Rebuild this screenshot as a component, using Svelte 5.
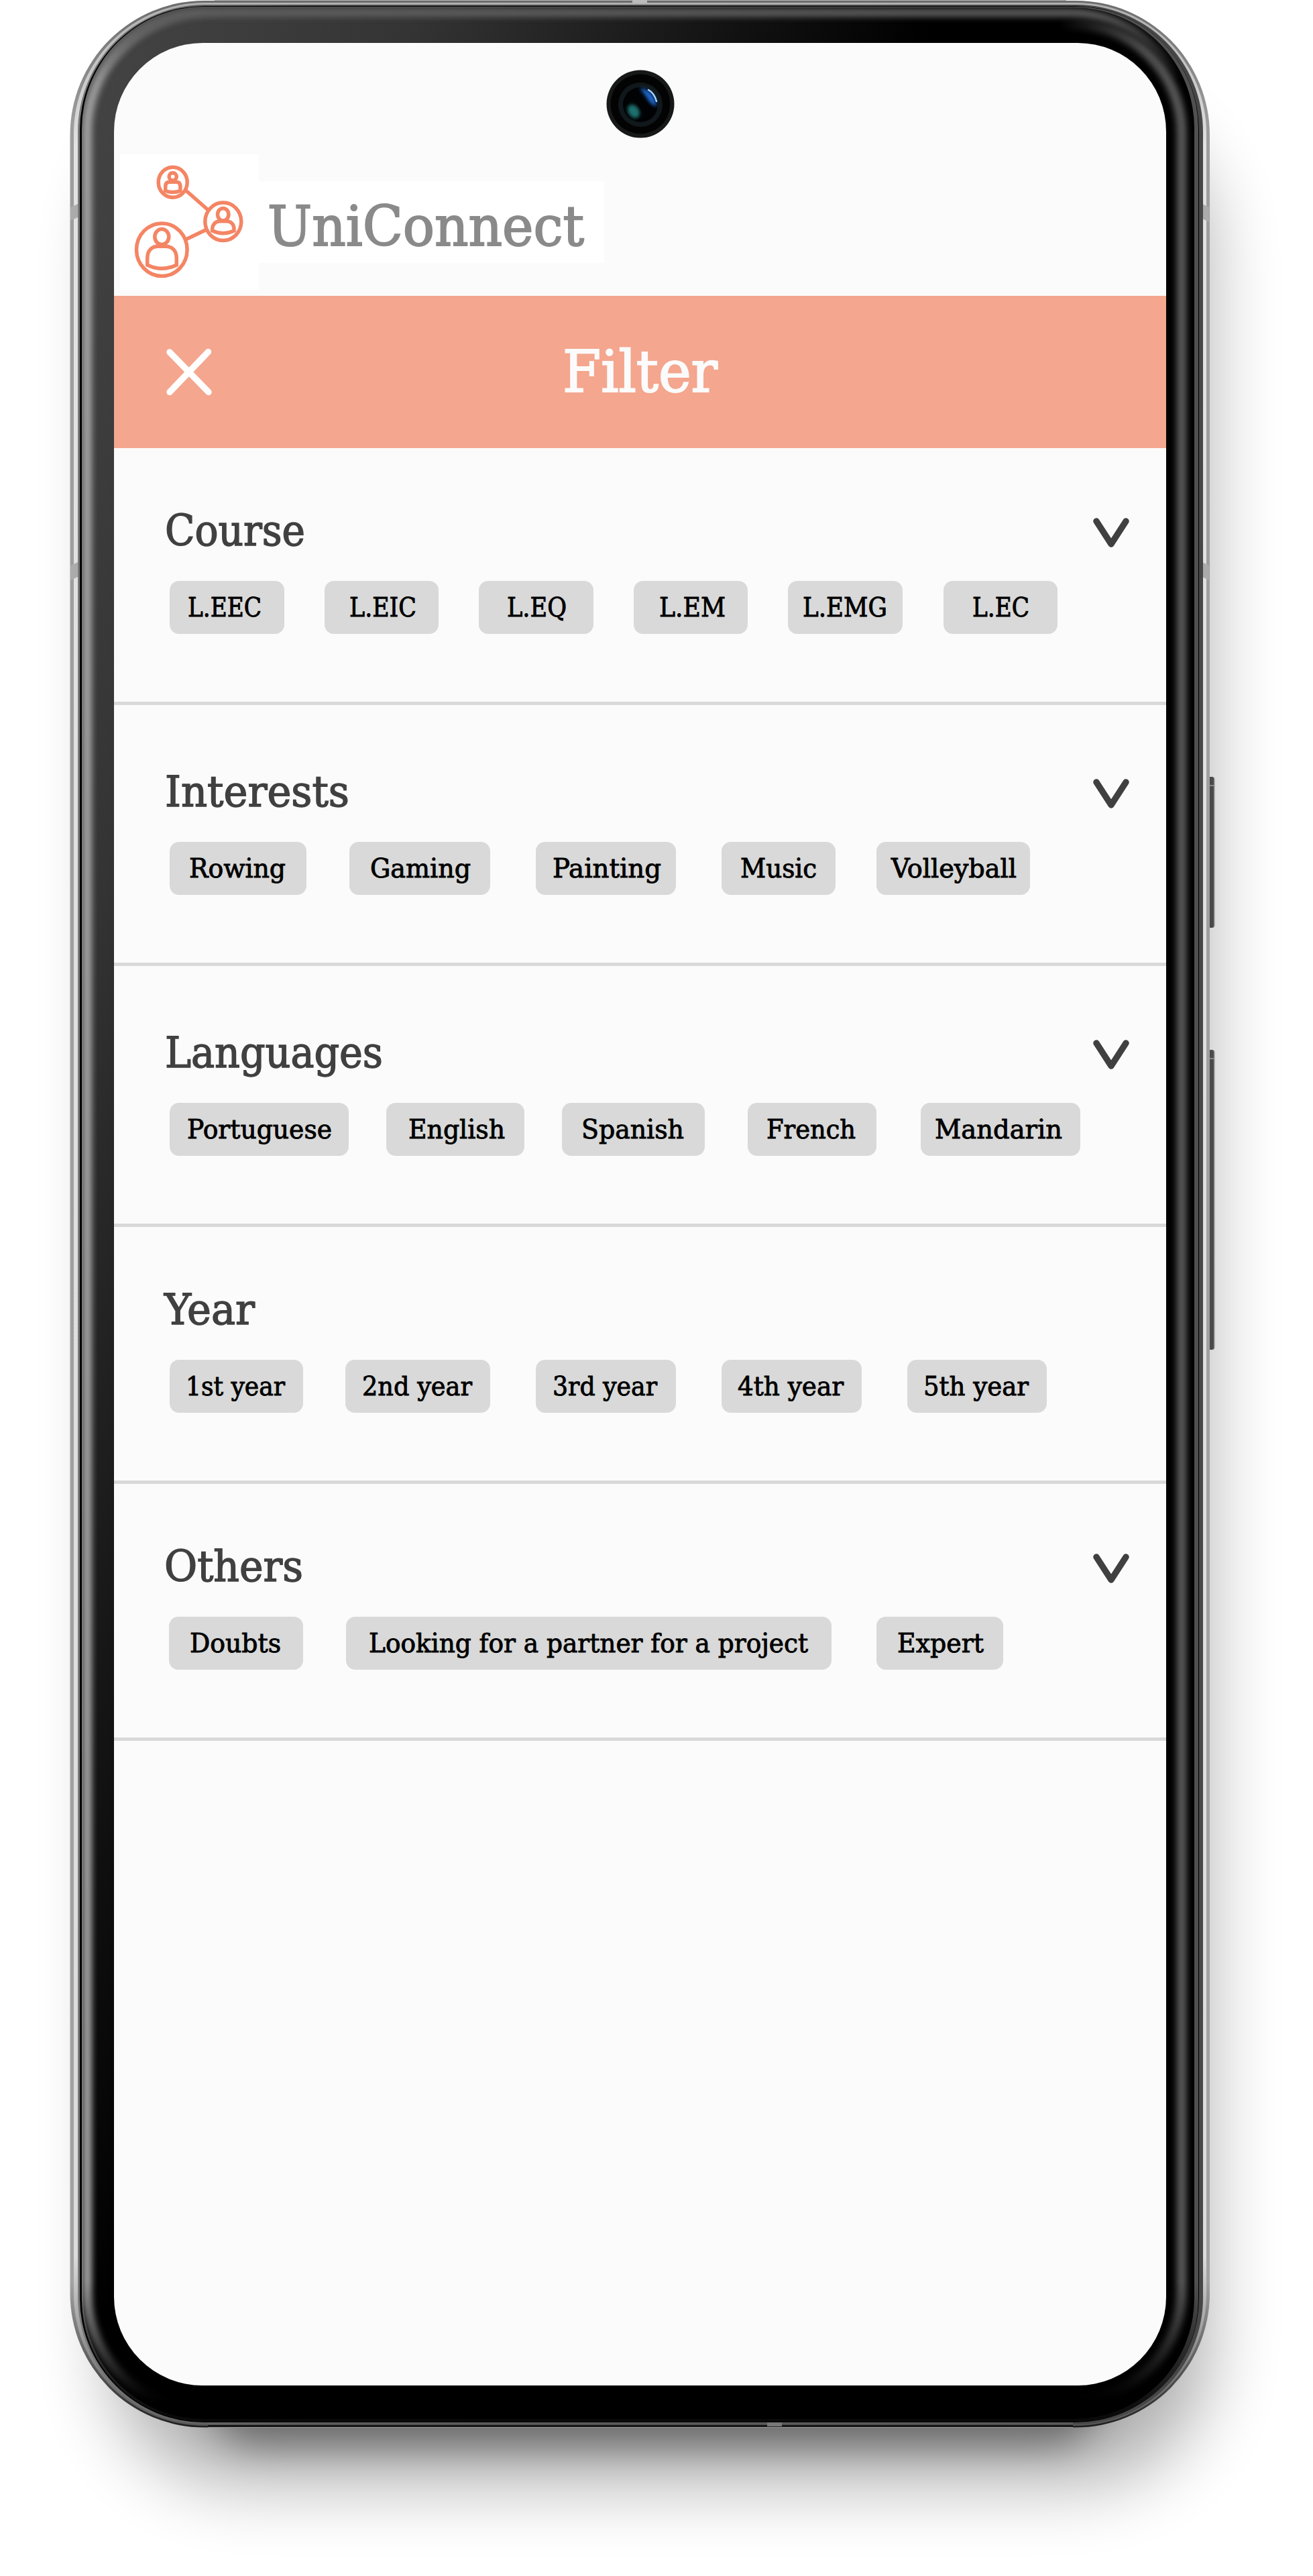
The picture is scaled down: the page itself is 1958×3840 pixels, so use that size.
<script>
  // Each chip: label, gap before it, chip width, label inset, label width.
  const sections = [
    {
      title: 'Course', width: 209, indent: 76, arrow: true, roomy: false,
      chips: [
        ['L.EEC', 83, 170.5, 27, 110],
        ['L.EIC', 60, 170.5, 37, 100],
        ['L.EQ', 60, 170.5, 42, 89],
        ['L.EM', 60, 170.5, 38.5, 99],
        ['L.EMG', 60, 170.5, 22, 126],
        ['L.EC', 61, 170.5, 43, 85]
      ]
    },
    {
      title: 'Interests', width: 275, indent: 76, arrow: true, roomy: true,
      chips: [
        ['Rowing', 83, 204, 29, 144],
        ['Gaming', 64, 210, 30.5, 150],
        ['Painting', 68, 209, 25, 162],
        ['Music', 68, 170, 28, 114],
        ['Volleyball', 61, 229, 22, 187]
      ]
    },
    {
      title: 'Languages', width: 325, indent: 76, arrow: true, roomy: true,
      chips: [
        ['Portuguese', 83, 267, 25.5, 216],
        ['English', 56, 206, 32.5, 144],
        ['Spanish', 56, 213, 29, 153],
        ['French', 64, 192, 27.5, 133],
        ['Mandarin', 66, 238, 20.5, 190]
      ]
    },
    {
      title: 'Year', width: 135, indent: 75, arrow: false, roomy: false,
      chips: [
        ['1st year', 83, 199, 23.5, 148],
        ['2nd year', 63, 216, 25, 164],
        ['3rd year', 68, 209, 25, 156],
        ['4th year', 68, 209, 24, 158],
        ['5th year', 68, 208, 24, 157]
      ]
    },
    {
      title: 'Others', width: 207, indent: 75, arrow: true, roomy: false,
      chips: [
        ['Doubts', 82, 200, 31, 136],
        ['Looking for a partner for a project', 64, 724, 33.5, 655],
        ['Expert', 67, 189, 30.5, 129]
      ]
    }
  ];
</script>

{#snippet fitted(text, width, height, baseline)}
  <svg class="fitted" {width} {height}>
    <text x="0" y={baseline} textLength={width} lengthAdjust="spacingAndGlyphs">{text}</text>
  </svg>
{/snippet}

<div class="stage">
  <svg class="device" viewBox="0 0 1958 3840" aria-hidden="true">
    <defs>
      <filter id="soft" filterUnits="userSpaceOnUse" x="-200" y="-200" width="2400" height="4300"><feGaussianBlur stdDeviation="55" /></filter>
      <filter id="near" filterUnits="userSpaceOnUse" x="-200" y="3000" width="2400" height="1000"><feGaussianBlur stdDeviation="28" /></filter>
      <filter id="glow" filterUnits="userSpaceOnUse" x="0" y="-100" width="1958" height="4000"><feGaussianBlur stdDeviation="5" /></filter>
      <filter id="lensBlur"><feGaussianBlur stdDeviation="2.500" /></filter>
      <linearGradient id="rim" x1="0" y1="0" x2="0" y2="1">
        <stop offset="0" stop-color="#6c6c6c" /><stop offset=".05" stop-color="#9d9d9d" />
        <stop offset=".94" stop-color="#a2a2a2" /><stop offset=".985" stop-color="#444" /><stop offset="1" stop-color="#1c1c1c" />
      </linearGradient>
      <linearGradient id="shine" x1="0" y1="0" x2="0" y2="1">
        <stop offset="0" stop-color="#b0b0b0" /><stop offset=".06" stop-color="#e2e2e2" />
        <stop offset=".93" stop-color="#dcdcdc" /><stop offset=".98" stop-color="#777" /><stop offset="1" stop-color="#555" />
      </linearGradient>
      <linearGradient id="lip" x1="0" y1="0" x2="1" y2="0">
        <stop offset="0" stop-color="#7a7a7a" /><stop offset=".2" stop-color="#4a4a4a" /><stop offset="1" stop-color="#474747" />
      </linearGradient>
      <linearGradient id="edge" gradientUnits="userSpaceOnUse" x1="0" y1="3400" x2="0" y2="3600">
        <stop offset="0" stop-color="#505050" /><stop offset="1" stop-color="#0a0a0a" />
      </linearGradient>
      <linearGradient id="body" gradientUnits="userSpaceOnUse" x1="105" y1="0" x2="1254" y2="415">
        <stop offset="0" stop-color="#464646" /><stop offset=".4" stop-color="#343434" /><stop offset=".75" stop-color="#141414" /><stop offset="1" stop-color="#000" />
      </linearGradient>
      <linearGradient id="leftGlow" gradientUnits="userSpaceOnUse" x1="120" y1="0" x2="330" y2="0">
        <stop offset="0" stop-color="#a8a8a8" /><stop offset=".25" stop-color="#8a8a8a" /><stop offset="1" stop-color="#555" stop-opacity="0" />
      </linearGradient>
      <linearGradient id="rightGlow" gradientUnits="userSpaceOnUse" x1="1580" y1="0" x2="1760" y2="0">
        <stop offset="0" stop-color="#555" stop-opacity="0" /><stop offset=".7" stop-color="#505050" /><stop offset="1" stop-color="#585858" />
      </linearGradient>
      <linearGradient id="topGlow" gradientUnits="userSpaceOnUse" x1="0" y1="20" x2="0" y2="120">
        <stop offset="0" stop-color="#606060" /><stop offset="1" stop-color="#505050" stop-opacity="0" />
      </linearGradient>
      <linearGradient id="fade" gradientUnits="userSpaceOnUse" x1="0" y1="3400" x2="0" y2="3580">
        <stop offset="0" stop-color="#fff" /><stop offset="1" stop-color="#000" />
      </linearGradient>
      <mask id="lowerFade" maskUnits="userSpaceOnUse" x="0" y="0" width="1958" height="3840">
        <rect width="1958" height="3840" fill="url(#fade)" />
      </mask>
      <clipPath id="glass"><rect x="122" y="10" width="1665" height="3600" rx="182" /></clipPath>
    </defs>

    <rect x="165" y="170" width="1635" height="3530" rx="190" opacity=".32" filter="url(#soft)" />
    <rect x="310" y="3200" width="1330" height="446" rx="80" opacity=".4" filter="url(#near)" />

    <rect x="1802" y="1158" width="9.500" height="225" rx="4" fill="#8e8e8e" />
    <rect x="1802" y="1158" width="8" height="225" rx="3" fill="#4a4a4a" />
    <rect x="1802" y="1565" width="9.500" height="447" rx="4" fill="#8e8e8e" />
    <rect x="1802" y="1565" width="8" height="447" rx="3" fill="#4a4a4a" />
    <path d="M1803 1171h7M1803 1578h7" stroke="#858585" stroke-width="2" />

    <rect x="320" y="0" width="1270" height="3" fill="#b5b5b5" />
    <rect x="104.500" y="1" width="1699.500" height="3617.500" rx="200" fill="url(#rim)" />
    <rect x="110" y="4" width="1689" height="3612" rx="195" fill="url(#shine)" />
    <path d="M105 309l11 -5v20l-11 5zM1793 304l10 5v22l-10 -5zM105 843l11 -5v22l-11 5zM1793 838l10 5v22l-10 -5z" fill="#ababab" />
    <rect x="116" y="7" width="1678" height="3607" rx="189" fill="url(#lip)" />
    <rect x="119" y="9" width="1669" height="3602" rx="185" fill="#000" />
    <rect x="122" y="10" width="1665" height="3600" rx="182" fill="url(#edge)" />
    <g clip-path="url(#glass)">
      <rect x="124" y="11" width="1657" height="3595" rx="180" fill="url(#body)" />
      <g mask="url(#lowerFade)">
        <rect x="130" y="20" width="1641" height="3574" rx="176" fill="none" stroke="url(#leftGlow)" stroke-width="14" filter="url(#glow)" />
        <rect x="150" y="36" width="1612" height="3542" rx="162" fill="none" stroke="url(#rightGlow)" stroke-width="15" filter="url(#glow)" />
        <rect x="132" y="19" width="1640" height="3574" rx="174" fill="none" stroke="url(#topGlow)" stroke-width="12" filter="url(#glow)" />
      </g>
    </g>
    <path d="M310 3612H1600" stroke="#6a6a6a" stroke-width="1.500" />
    <path d="M310 3616H1600" stroke="#111" stroke-width="2" />
    <path d="M310 3618.500H1600" stroke="#999" stroke-width="1" />
    <path d="M943 2h22" stroke="#bdbdbd" stroke-width="5" />
    <path d="M1144 3614h22" stroke="#777" stroke-width="6" />
  </svg>

  <main class="screen">
    <header class="brand">
      <div class="mark">
        <svg width="207" height="202" viewBox="0 0 207 202" fill="none" stroke="#f48564" stroke-width="5.500">
          <path d="M98 53.700L131.300 83M98 127L127.300 113" />
          <ellipse cx="78.700" cy="41.700" rx="21.500" ry="22.500" />
          <ellipse cx="153.800" cy="100.300" rx="27" ry="28.200" />
          <ellipse cx="62.300" cy="142.200" rx="37.800" ry="39.300" />
          <circle cx="78.700" cy="33.300" r="5.600" />
          <path d="M67.700 54.500V48Q67.700 41.300 74 41.300H83.500Q89.900 41.300 89.900 48V54.500Q78.700 58.500 67.700 54.500Z" />
          <ellipse cx="153.700" cy="89.700" rx="8.200" ry="9.200" />
          <path d="M137.700 114V111C138 104 143 99.800 149 99.800H158.500C165 99.800 169.800 104 170 111V114Q153.700 121.500 137.700 114Z" />
          <ellipse cx="62.300" cy="123" rx="10.500" ry="11.600" />
          <path d="M40.700 165V155C40.700 143 48 137.300 56 137.300H68.500C77 137.300 84.300 143 84.300 155V165Q62.500 175.500 40.700 165Z" />
        </svg>
      </div>
      <div class="name">{@render fitted('UniConnect', 472, 122, 96)}</div>
    </header>

    <div class="bar">
      <svg class="close" width="68" height="71" viewBox="0 0 68 71" fill="none" stroke="#fff" stroke-width="9.500" stroke-linecap="round">
        <path d="M5 6L63 65.500M62.500 5.500L5 65.500" />
      </svg>
      <h1>{@render fitted('Filter', 231, 100, 79)}</h1>
    </div>

    {#each sections as section}
      <section class:roomy={section.roomy}>
        <div class="heading">
          <h2 style:margin-left="{section.indent}px">{@render fitted(section.title, section.width, 64, 53.5)}</h2>
          {#if section.arrow}
            <svg class="arrow" width="54" height="44" viewBox="0 0 54 44" fill="none" stroke="#404040" stroke-width="9.500" stroke-linecap="round" stroke-linejoin="round">
              <path d="M5 5L27 39L49 5" />
            </svg>
          {/if}
        </div>
        <div class="chips">
          {#each section.chips as [label, gap, width, inset, labelWidth]}
            <span class="chip" style:margin-left="{gap}px" style:width="{width}px" style:padding-left="{inset}px">
              {@render fitted(label, labelWidth, 78, 53)}
            </span>
          {/each}
        </div>
      </section>
    {/each}

    <svg class="camera" viewBox="0 0 102 102" aria-hidden="true">
      <circle cx="51" cy="51" r="50.500" fill="#171818" />
      <circle cx="51" cy="51" r="44.500" fill="#030303" />
      <circle cx="51" cy="52" r="33" fill="#11181b" />
      <circle cx="51" cy="52" r="26" fill="#010204" />
      <ellipse cx="41" cy="62" rx="8" ry="11" fill="#1f716e" filter="url(#lensBlur)" transform="rotate(-35 41 62)" />
      <path d="M50 27Q73 30 75 55Q65 51 60 41Z" fill="#1f66c8" filter="url(#lensBlur)" />
      <path d="M63 30Q72 35 75 47" fill="none" stroke="#a9d8ff" stroke-width="2.500" stroke-linecap="round" />
    </svg>
  </main>
</div>

<style>
  :global(body) {
    background: #fff;
  }
  .stage {
    position: relative;
    box-sizing: border-box;
    width: 1958px;
    height: 3840px;
    padding: 64px 0 0 170px;
    overflow: hidden;
    font-family: 'DejaVu Serif Condensed', 'DejaVu Serif', serif;
    font-stretch: condensed;
  }
  .device {
    position: absolute;
    inset: 0;
    width: 1958px;
    height: 3840px;
  }
  .screen {
    position: relative;
    width: 1569px;
    height: 3491.5px;
    border-radius: 132px;
    background: #fbfbfb;
    overflow: hidden;
  }
  .camera {
    position: absolute;
    left: 733.5px;
    top: 40px;
    width: 102px;
    height: 102px;
  }
  .fitted {
    display: block;
    overflow: visible;
    fill: currentColor;
    stroke: currentColor;
    stroke-width: 0.022em;
  }
  .brand {
    display: flex;
    align-items: center;
    box-sizing: border-box;
    height: 377px;
    padding: 157px 0 0 9px;
  }
  .mark {
    width: 207px;
    height: 202px;
    background: #fff;
  }
  .mark svg {
    display: block;
  }
  .name {
    width: 502px;
    height: 122px;
    padding-left: 13px;
    background: #fff;
    color: #8a8a8a;
    font-size: 83px;
  }
  .bar {
    display: grid;
    grid-template-columns: 1fr auto 1fr;
    align-items: center;
    height: 227px;
    background: #f4a68e;
    color: #fbfbfb;
  }
  .close {
    margin-left: 78px;
  }
  h1,
  h2 {
    margin: 0;
    font-weight: 400;
  }
  h1 {
    font-size: 86px;
  }
  h2 {
    font-size: 63px;
    color: #404040;
  }
  section {
    box-sizing: border-box;
    height: 383px;
    padding-top: 91px;
    border-bottom: 5px solid #d9d9d9;
  }
  section.roomy {
    height: 389px;
    padding-top: 97px;
  }
  .heading {
    display: flex;
    justify-content: space-between;
    height: 64px;
    padding-right: 55px;
  }
  .arrow {
    margin-top: 13px;
  }
  .chips {
    display: flex;
    margin-top: 43px;
  }
  .chip {
    box-sizing: border-box;
    flex: none;
    height: 78.5px;
    border-radius: 14px;
    background: #d9d9d9;
    color: #000;
    font-size: 39px;
  }
</style>
